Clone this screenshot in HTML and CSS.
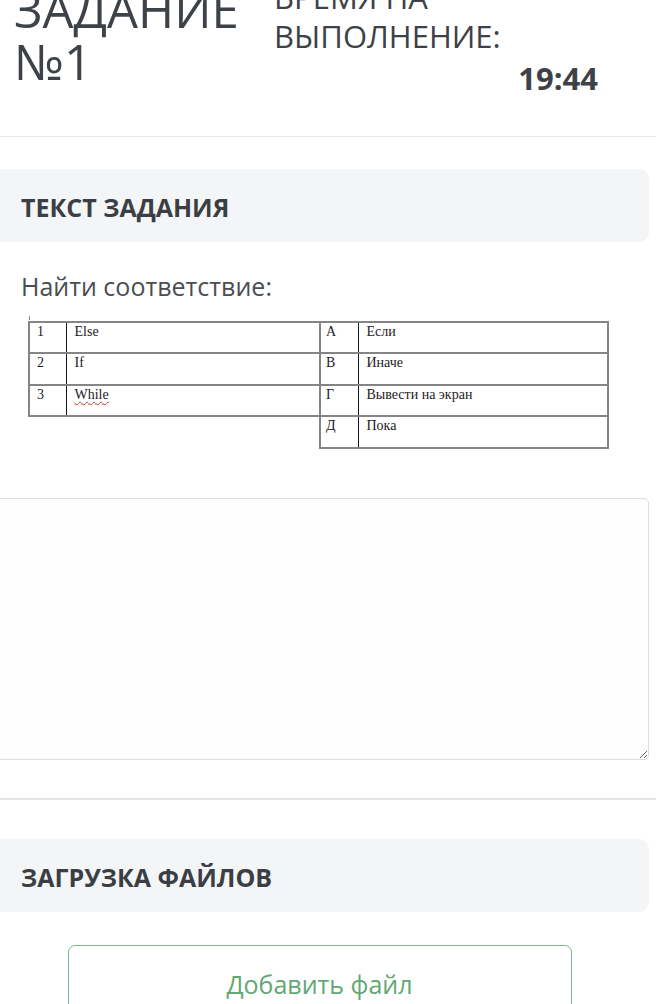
FILE: index.html
```html
<!DOCTYPE html>
<html lang="ru">
<head>
<meta charset="utf-8">
<title>Задание №1</title>
<link rel="stylesheet" href="styles.css">
</head>
<body>
<div class="page">
  <header class="head">
    <h1 class="title">ЗАДАНИЕ<br>№1</h1>
    <div class="timer">
      <div class="timer-label">ВРЕМЯ НА<br>ВЫПОЛНЕНИЕ:</div>
      <div class="timer-value">19:44</div>
    </div>
  </header>

  <section class="panel">
    <h2 class="panel-title">ТЕКСТ ЗАДАНИЯ</h2>
  </section>

  <p class="question">Найти соответствие:</p>

  <div class="match">
    <span class="tick"></span>
    <table class="tbl tbl-left">
      <tr><td class="c-num">1</td><td class="c-text">Else</td></tr>
      <tr><td class="c-num">2</td><td class="c-text">If</td></tr>
      <tr><td class="c-num">3</td><td class="c-text"><span class="spell">While</span></td></tr>
    </table>
    <table class="tbl tbl-right">
      <tr><td class="c-let">А</td><td class="c-text">Если</td></tr>
      <tr><td class="c-let">В</td><td class="c-text">Иначе</td></tr>
      <tr><td class="c-let">Г</td><td class="c-text">Вывести на экран</td></tr>
      <tr><td class="c-let">Д</td><td class="c-text">Пока</td></tr>
    </table>
  </div>

  <textarea class="answer"></textarea>

  <div class="divider"></div>

  <section class="panel panel-upload">
    <h2 class="panel-title">ЗАГРУЗКА ФАЙЛОВ</h2>
  </section>

  <button class="add-file" type="button">Добавить файл</button>
</div>
</body>
</html>
```

FILE: styles.css
```css
html, body {
  margin: 0;
  padding: 0;
  background: #ffffff;
  overflow: hidden;
}

body {
  font-family: "Open Sans", "Noto Sans", sans-serif;
  color: #3d4148;
}

.page {
  margin-left: -10px;
  margin-right: 7px;
}

.head {
  display: flex;
  align-items: flex-start;
  margin-top: -22px;
  margin-right: -7px;
  padding: 0 0 38px 24px;
  border-bottom: 1px solid #e6e6e6;
}

.title {
  width: 260px;
  margin: 5px 0 0 0;
  font-size: 49px;
  line-height: 52px;
  font-weight: 400;
  color: #3d4148;
}

.timer {
  width: 324px;
}

.timer-label {
  font-size: 31px;
  line-height: 39px;
  font-weight: 400;
  color: #3d4148;
}

.timer-value {
  margin-top: 2px;
  text-align: right;
  font-size: 31px;
  line-height: 40px;
  font-weight: 700;
  color: #3d4148;
}

.panel {
  margin-top: 32px;
  background: #f4f5f7;
  border-radius: 0 10px 10px 0;
  padding: 22px 31px 18px;
}

.panel-title {
  margin: 0;
  font-size: 25px;
  line-height: 33px;
  font-weight: 700;
  color: #3a3e45;
}

.question {
  margin: 28px 0 0 31px;
  font-size: 25px;
  line-height: 33px;
  font-weight: 400;
  color: #4a4d53;
}

.match {
  position: relative;
  display: flex;
  align-items: flex-start;
  margin: 18px 0 0 38px;
  font-family: "Liberation Serif", "Times New Roman", serif;
  font-size: 14px;
  color: #222;
}

.tick {
  position: absolute;
  left: 1px;
  top: -5px;
  width: 1px;
  height: 4px;
  background: #888;
}

.tbl {
  border-collapse: collapse;
}

.tbl td {
  height: 31px;
  padding: 1px 0 0 8px;
  vertical-align: top;
  border-top: 2px solid #858585;
  border-bottom: 2px solid #858585;
  box-sizing: border-box;
  line-height: 16px;
}

.tbl tr + tr td {
  height: 31.5px;
}

.tbl-left {
  width: 291px;
  border-left: 2px solid #858585;
}

.tbl-left .c-num {
  width: 37px;
  padding-left: 7px;
  border-right: 1px solid #111;
}

.tbl-right {
  width: 290px;
  border-left: 2px solid #858585;
  border-right: 2px solid #858585;
}

.tbl-right .c-let {
  width: 38px;
  padding-left: 5px;
  border-right: 1px solid #111;
}

.spell {
  text-decoration: underline wavy #d03030;
  text-decoration-thickness: 1px;
  text-underline-offset: 2px;
}

.answer {
  display: block;
  box-sizing: border-box;
  width: 100%;
  height: 262px;
  margin-top: 49px;
  border: 1px solid #dedede;
  border-radius: 0 5px 5px 0;
  background: #fefefe;
  resize: vertical;
  font-family: "Open Sans", sans-serif;
}

.divider {
  margin-top: 38px;
  margin-right: -7px;
  height: 2px;
  background: #e4e4e4;
}

.panel-upload {
  margin-top: 39px;
}

.add-file {
  display: block;
  width: 504px;
  height: 70px;
  margin: 33px auto 0;
  padding: 8px 0 0;
  background: #ffffff;
  border: 1px solid #7db78b;
  border-radius: 7px;
  font-family: "Open Sans", sans-serif;
  font-size: 25px;
  color: #62a873;
  cursor: pointer;
}
```
